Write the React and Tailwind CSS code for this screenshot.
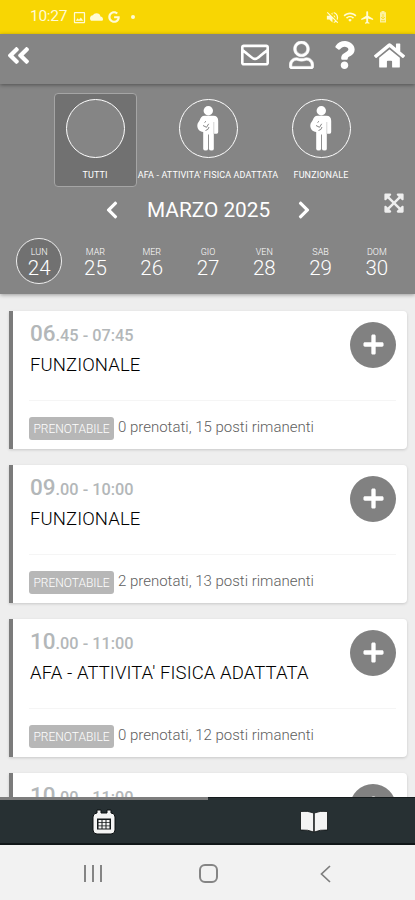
import React from "react";
import {
  FaAngleDoubleLeft,
  FaRegEnvelope,
  FaRegUser,
  FaQuestion,
  FaHome,
  FaChevronLeft,
  FaChevronRight,
  FaExpandArrowsAlt,
  FaPlus,
  FaGoogle,
} from "react-icons/fa";
import { MdOutlineImage, MdCloud, MdVolumeOff, MdWifi, MdFlight } from "react-icons/md";

const days = [
  { name: "LUN", number: 24 },
  { name: "MAR", number: 25 },
  { name: "MER", number: 26 },
  { name: "GIO", number: 27 },
  { name: "VEN", number: 28 },
  { name: "SAB", number: 29 },
  { name: "DOM", number: 30 },
];

const lessons = [
  { hour: "06", rest: ".45 - 07:45", title: "FUNZIONALE", info: "0 prenotati, 15 posti rimanenti" },
  { hour: "09", rest: ".00 - 10:00", title: "FUNZIONALE", info: "2 prenotati, 13 posti rimanenti" },
  { hour: "10", rest: ".00 - 11:00", title: "AFA - ATTIVITA' FISICA ADATTATA", info: "0 prenotati, 12 posti rimanenti" },
  { hour: "10", rest: ".00 - 11:00", title: "FUNZIONALE", info: "0 prenotati, 15 posti rimanenti" },
];

// Figure holding a ball under the arm
function PersonIcon() {
  return (
    <svg viewBox="0 0 22 45" className="h-[45px] w-[22px]" fill="white">
      <circle cx="11.300" cy="4.800" r="4.700" />
      <path d="M7.500 9.700h9q4.500 0 4.700 5V26q0 1.800-1.500 1.800h-2.900V43q0 1.500-2.300 1.500T11.900 43V28.500h-.9V43q0 1.500-2.300 1.500T6.200 43V26C2.500 25.500.3 23 .3 19.500c0-2.500 1.700-4 2.500-5.500 1-2.500 2-4.300 4.700-4.300z" />
      <path d="M6 19.500l3.500 1.800 2.200-3.500M7.500 16.500l1.500-1.200M8.500 24.500q3-.5 3.500-3.500" fill="none" stroke="#858585" strokeWidth="1" />
      <path d="M16.800 16v12" stroke="#b5b5b5" strokeWidth="0.600" />
    </svg>
  );
}

function StatusBar() {
  return (
    <div className="flex h-[34px] shrink-0 items-center bg-[#f8d603] pl-[30px] pr-[28px] text-[#fffbd5]">
      <span className="w-[42px] text-[15.500px] tracking-[-0.3px]">10:27</span>
      <MdOutlineImage className="h-[15px] w-[15px]" />
      <MdCloud className="ml-[3px] h-[13px] w-[13px] [clip-path:inset(0_0_22%_0)]" />
      <FaGoogle className="ml-[5px] h-[12px] w-[12px]" />
      <span className="ml-[11px] h-1 w-1 rounded-full bg-[#fffbd5]" />
      <div className="ml-auto flex items-center gap-[3px]">
        <MdVolumeOff className="h-[15px] w-[15px]" />
        <MdWifi className="h-[14px] w-[14px]" />
        <MdFlight className="h-[15px] w-[15px]" />
        <svg viewBox="0 0 8 12" className="ml-[1px] h-[12px] w-[8px]" fill="currentColor">
          <path d="M2.500 0h3v1.200H7V11.500H1V1.200h1.500z" opacity="0.75" />
          <path d="M4 3v4M2 6l2 2 2-2M2 9.700h4" fill="none" stroke="#f8d603" strokeWidth="0.700" />
        </svg>
      </div>
    </div>
  );
}

function Header() {
  return (
    <div className="relative z-10 flex h-[50px] shrink-0 items-start bg-[#858585] pl-[5px] pr-[10px] text-white shadow-[0_1px_4px_rgba(0,0,0,0.4)]">
      <FaAngleDoubleLeft className="mt-[8px] h-[27px] w-[27px]" />
      <FaRegEnvelope className="ml-auto mt-[7px] h-[28px] w-[28px]" />
      <FaRegUser className="ml-[20px] mt-[7px] h-[28px] w-[25px]" stroke="white" strokeWidth="10" />
      <FaQuestion className="ml-[17px] mt-[7px] h-[28px] w-[27px]" />
      <FaHome className="ml-[16px] mt-[7px] h-[29px] w-[31px]" />
    </div>
  );
}

function Category({ label, active, person }) {
  return (
    <div className="flex w-[113px] justify-center">
      <div
        className={
          active
            ? "flex h-[94px] w-[83px] flex-col items-center rounded border border-[#a5a5a5] bg-[#717171] pt-[5px]"
            : "flex h-[94px] w-[83px] flex-col items-center pt-[6px]"
        }
      >
        <div className="flex h-[59px] w-[59px] shrink-0 items-center justify-center rounded-full border-[1.500px] border-white bg-[#858585]">
          {person && <PersonIcon />}
        </div>
        <span className="mt-[11px] whitespace-nowrap text-[9px] leading-[12px] tracking-[0.13px] text-white">{label}</span>
      </div>
    </div>
  );
}

function LessonCard({ lesson }) {
  return (
    <div className="flex h-[138px] shrink-0 flex-col rounded-r border-l-4 border-[#7b7b7b] bg-white pl-4 pr-[11px] shadow-[0_1px_3px_rgba(0,0,0,0.16)]">
      <div className="flex h-[90px] justify-between border-b border-[#f5f5f5]">
        <div className="pl-[1px] pt-[9px]">
          <div className="h-[26px] whitespace-nowrap font-medium leading-[26px] text-[#b3b7b9]">
            <span className="text-[22.500px]">{lesson.hour}</span>
            <span className="text-[16.300px]">{lesson.rest}</span>
          </div>
          <h2 className="mt-[7px] whitespace-nowrap text-[18.500px] font-light leading-6 tracking-[0.1px] text-black">
            {lesson.title}
          </h2>
        </div>
        <button className="mt-[11px] flex h-[46px] w-[46px] items-center justify-center rounded-full bg-[#818181]">
          <FaPlus className="mb-[1px] h-[23px] w-[23px] text-white" />
        </button>
      </div>
      <div className="mt-[15px] flex h-[24px] items-center">
        <span className="mt-[1px] flex h-[23px] w-[85px] items-center justify-center rounded-[3px] bg-[#b7b7b7] text-[12px] font-light text-white">
          PRENOTABILE
        </span>
        <span className="mb-[2px] ml-1 whitespace-nowrap text-[15px] font-light text-[#606060]">{lesson.info}</span>
      </div>
    </div>
  );
}

function App() {
  return (
    <div className="flex h-[900px] w-[415px] flex-col overflow-hidden bg-[#eeeeee] font-['Roboto',sans-serif]">
      <StatusBar />
      <Header />

      {/* Filters and week */}
      <div className="relative flex h-[210px] shrink-0 flex-col bg-[#858585] pl-[1px] pt-[9px] text-white shadow-[0_1px_4px_rgba(0,0,0,0.35)]">
        <div className="flex justify-center">
          <Category label="TUTTI" active />
          <Category label="AFA - ATTIVITA' FISICA ADATTATA" person />
          <Category label="FUNZIONALE" person />
        </div>

        <div className="mt-[9px] flex h-[30px] items-center pl-[102px] pr-[10px]">
          <FaChevronLeft className="mb-[2px] h-[20px] w-[18px]" />
          <span className="ml-[26px] w-[123px] whitespace-nowrap text-center text-[20.800px]">MARZO 2025</span>
          <FaChevronRight className="mb-[2px] ml-[25px] h-[20px] w-[18px]" />
          <FaExpandArrowsAlt className="mb-[17px] ml-auto h-[22px] w-[22px] text-[#eee]" />
        </div>

        <div className="mt-[12px] flex justify-center px-[10px]">
          {days.map((day, index) => (
            <div key={day.number} className="flex flex-1 justify-center">
              <div
                className={
                  index === 0
                    ? "flex h-[46px] w-[46px] flex-col items-center rounded-full border-[1.500px] border-[#eee] bg-[#717171] pt-[8px]"
                    : "flex h-[46px] w-[46px] flex-col items-center pt-[9px]"
                }
              >
                <span className="text-[9px] font-light leading-[10px]">{day.name}</span>
                <span className="text-[20.500px] font-light leading-[22px]">{day.number}</span>
              </div>
            </div>
          ))}
        </div>
      </div>

      {/* Lessons */}
      <div className="flex min-h-0 flex-1 flex-col gap-4 overflow-hidden pl-[9px] pr-2 pt-[17px]">
        {lessons.map((lesson, index) => (
          <LessonCard key={index} lesson={lesson} />
        ))}
      </div>

      {/* Tabs */}
      <div className="grid h-[48px] shrink-0 grid-cols-2 border-b-2 border-[#111719] bg-[#273033]">
        <div className="flex items-center justify-center border-t-[3px] border-[#7d7d7d]">
          <svg viewBox="0 0 24 26" className="h-[26px] w-[24px]">
            <path d="M5 1h4v3h6V1h4v3q4 0 4 4v13q0 4-4 4H5q-4 0-4-4V8q0-4 4-4z" fill="#f4f4f4" stroke="#0c1012" strokeWidth="1" />
            <path d="M5 9.500h14v11H5z" fill="#14191b" />
            <path d="M6.500 11h3v2.300h-3zM10.500 11h3v2.300h-3zM14.500 11h3v2.300h-3zM6.500 14.100h3v2.300h-3zM10.500 14.100h3v2.300h-3zM14.500 14.100h3v2.300h-3zM6.500 17.200h3v2.300h-3zM10.500 17.200h3v2.300h-3zM14.500 17.200h3v2.300h-3z" fill="#f4f4f4" />
          </svg>
        </div>
        <div className="flex items-center justify-center border-t border-[#151b1d] pl-[5px]">
          <svg viewBox="0 0 28 23" className="mt-[1px] h-[23px] w-[28px]" fill="#f4f4f4" stroke="#0c1012" strokeWidth="0.8">
            <path d="M.5 1.500Q8 .5 13.700 3v19Q8 19.500.5 20z" />
            <path d="M27.500 1.500Q20 .5 14.300 3v19q5.700-2.500 13.200-2z" />
          </svg>
        </div>
      </div>

      {/* Android navigation */}
      <div className="flex h-[55px] shrink-0 items-center bg-[#f2f2f2] pb-[1px] pt-[3px] text-[#7d7d7d]">
        <div className="ml-[84px] flex h-[17px] w-[18px] justify-between">
          <span className="w-[2px] bg-[#858585]" />
          <span className="w-[2px] bg-[#858585]" />
          <span className="w-[2px] bg-[#858585]" />
        </div>
        <span className="ml-[97px] h-[19px] w-[19px] rounded-[6px] border-2 border-[#858585]" />
        <svg viewBox="0 0 11 18" className="ml-[102px] h-[18px] w-[11px]" fill="none" stroke="currentColor" strokeWidth="1.700">
          <path d="M10 1L1.500 9l8.500 8" />
        </svg>
      </div>
    </div>
  );
}

export default App;
